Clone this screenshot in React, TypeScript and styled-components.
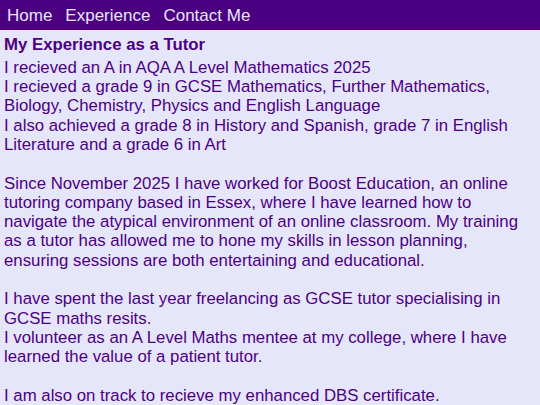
import React from 'react';
import styled, { createGlobalStyle } from 'styled-components';

const GlobalStyle = createGlobalStyle`
  body {
    margin: 0;
    background-color: #e6e6fa;
    font-family: "Liberation Sans", Arial, sans-serif;
  }
`;

const NavBar = styled.nav`
  display: flex;
  align-items: center;
  gap: 13px;
  padding: 6px 7px 4px;
  background-color: #4b0082;

  .link {
    font-size: 17px;
    line-height: 19.5px;
    text-decoration: none;
    color: #e6e6fa;
  }
`;

const Content = styled.main`
  padding: 5px 4px 0;
  color: #4b0082;
  font-size: 16.8px;
  line-height: 19.3px;
`;

const Heading = styled.h1`
  margin: 0 0 4px;
  font-size: 16.8px;
  font-weight: bold;
`;

const Text = styled.p`
  margin: 0;
`;

function App() {
  return (
    <>
      <GlobalStyle />
      <NavBar>
        <a className="link" href="#home">Home</a>
        <a className="link" href="#experience">Experience</a>
        <a className="link" href="#contact">Contact Me</a>
      </NavBar>
      <Content>
        <Heading>My Experience as a Tutor</Heading>
        <Text>
          I recieved an A in AQA A Level Mathematics 2025
          <br />
          I recieved a grade 9 in GCSE Mathematics, Further Mathematics, Biology, Chemistry, Physics and English Language
          <br />
          I also achieved a grade 8 in History and Spanish, grade 7 in English Literature and a grade 6 in Art
          <br />
          <br />
          Since November 2025 I have worked for Boost Education, an online tutoring company based in Essex, where I have learned how to navigate the atypical environment of an online classroom. My training as a tutor has allowed me to hone my skills in lesson planning, ensuring sessions are both entertaining and educational.
          <br />
          <br />
          I have spent the last year freelancing as GCSE tutor specialising in GCSE maths resits.
          <br />
          I volunteer as an A Level Maths mentee at my college, where I have learned the value of a patient tutor.
          <br />
          <br />
          I am also on track to recieve my enhanced DBS certificate.
        </Text>
      </Content>
    </>
  );
}

export default App;
